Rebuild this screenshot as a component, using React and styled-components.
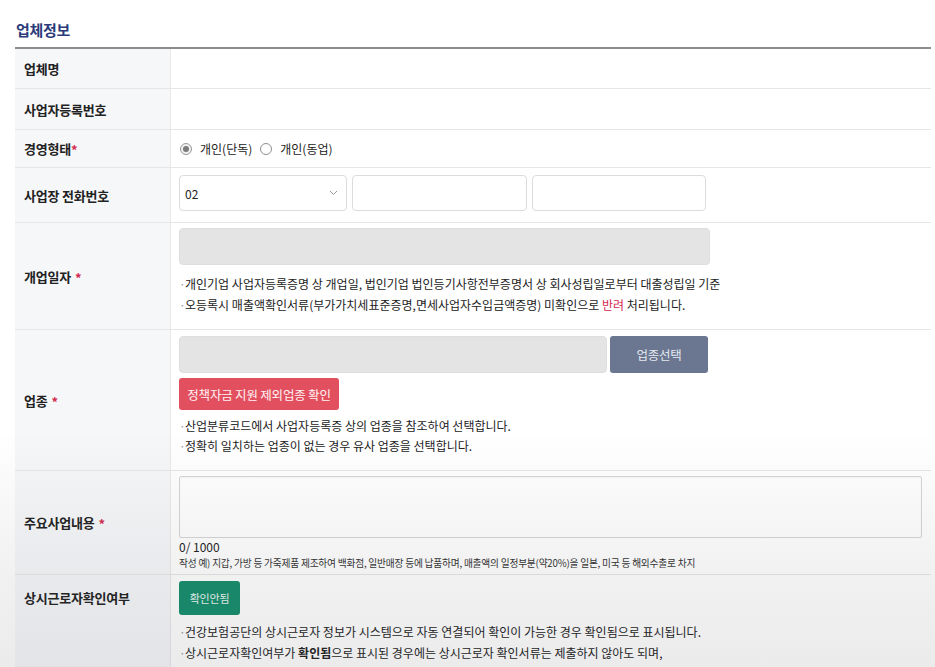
import React from 'react'
import styled, { createGlobalStyle } from 'styled-components'

const GlobalStyle = createGlobalStyle`
  html, body {
    margin: 0;
    padding: 0;
    background: #ffffff;
  }
  body {
    font-family: "Noto Sans CJK KR", "Noto Sans", sans-serif;
    color: #222;
  }
`

const Page = styled.div`
  position: relative;
  width: 935px;
  height: 667px;
  overflow: hidden;
  padding: 0 4px 0 15px;
  box-sizing: border-box;
  &::after {
    content: '';
    position: absolute;
    left: 0;
    right: 0;
    top: 430px;
    bottom: 0;
    pointer-events: none;
    background: linear-gradient(to bottom, rgba(0,0,0,0) 0%, rgba(60,60,70,0.07) 60%, rgba(60,60,70,0.1) 100%);
  }
`

const Title = styled.h2`
  margin: 0;
  height: 47px;
  box-sizing: border-box;
  padding-top: 19px;
  padding-left: 1px;
  font-size: 15px;
  line-height: 22px;
  font-weight: 700;
  color: #2b3b7a;
  letter-spacing: -0.3px;
`

const Table = styled.div`
  border-top: 2px solid #8c8c8c;
`

const Row = styled.div`
  display: grid;
  grid-template-columns: 156px 1fr;
  min-height: ${({ $h }) => $h}px;
  box-sizing: border-box;
  border-bottom: 1px solid #e6e6e6;
`

const Label = styled.div`
  display: flex;
  align-items: ${({ $top }) => ($top ? 'flex-start' : 'center')};
  padding: ${({ $top }) => ($top ? '13px 9px 0' : '0 9px')};
  background: #f6f7f9;
  border-right: 1px solid #e8e8e8;
  font-size: 13px;
  font-weight: 700;
  color: #222;
  letter-spacing: -0.2px;
`

const Star = styled.span`
  color: #d3294e;
  font-size: 13px;
  font-weight: 700;
  margin-left: ${({ $gap }) => ($gap ? '4px' : '0')};
  position: relative;
  top: 1px;
`

const Cell = styled.div`
  display: flex;
  flex-direction: column;
  justify-content: ${({ $center }) => ($center ? 'center' : 'flex-start')};
  padding: ${({ $pt }) => $pt ?? 7}px 9px 0 8px;
  background: #fff;
`

const RadioGroup = styled.div`
  display: flex;
  align-items: center;
  font-size: 12px;
  color: #222;
`

const RadioDot = styled.span`
  width: 12px;
  height: 12px;
  border-radius: 50%;
  box-sizing: border-box;
  border: 1px solid ${({ $on }) => ($on ? '#9a9a9a' : '#8f8f8f')};
  background: ${({ $on }) => ($on ? '#f0f0f0' : '#fff')};
  display: inline-flex;
  align-items: center;
  justify-content: center;
  margin: 0 8px 0 1px;
  &::after {
    content: '';
    width: 6px;
    height: 6px;
    border-radius: 50%;
    background: ${({ $on }) => ($on ? '#7a7a7a' : 'transparent')};
  }
`

const RadioText = styled.span`
  margin-right: 7px;
`

const FieldLine = styled.div`
  display: flex;
  gap: ${({ $gap }) => $gap ?? 4}px;
  width: ${({ $w }) => $w}px;
`

const Select = styled.div`
  width: 168px;
  flex: none;
  height: 36px;
  box-sizing: border-box;
  border: 1px solid #dcdcdc;
  border-radius: 4px;
  background: #fff;
  display: flex;
  align-items: center;
  justify-content: space-between;
  padding: 0 8px 0 5px;
  font-size: 12px;
  color: #222;
`

const TextInput = styled.div`
  flex: 1;
  height: 36px;
  box-sizing: border-box;
  border: 1px solid #dcdcdc;
  border-radius: 4px;
  background: #fff;
`

const GrayBox = styled.div`
  flex: ${({ $w }) => ($w ? 'none' : '1')};
  height: 37px;
  box-sizing: border-box;
  border: 1px solid #dedede;
  border-radius: 4px;
  background: #e4e4e4;
  width: ${({ $w }) => ($w ? `${$w}px` : 'auto')};
`

const Button = styled.button`
  border: none;
  border-radius: 3px;
  font-family: inherit;
  font-size: ${({ $fs }) => $fs ?? 12.5}px;
  color: ${({ $color }) => $color};
  background: ${({ $bg }) => $bg};
  height: ${({ $h }) => $h}px;
  width: ${({ $w }) => $w}px;
  padding: 0;
  margin-top: ${({ $mt }) => $mt ?? 0}px;
  letter-spacing: -0.2px;
  white-space: nowrap;
`

const Notes = styled.ul`
  list-style: none;
  margin: ${({ $mt }) => $mt}px 0 0;
  padding: 0;
  font-size: 12px;
  line-height: ${({ $lh }) => $lh ?? 21}px;
  color: #222;
`

const Note = styled.li`
  display: flex;
  white-space: nowrap;
  &::before {
    content: '·';
    color: #9a9a9a;
    width: 6px;
    flex: none;
  }
  b {
    font-weight: 700;
  }
`

const Red = styled.span`
  color: #d3294e;
`

const TextArea = styled.div`
  height: 62px;
  box-sizing: border-box;
  border: 1px solid #d6d6d6;
  border-radius: 2px;
  background: #fff;
  box-shadow: inset 0 1px 2px rgba(0,0,0,0.04);
`

const Counter = styled.div`
  font-size: 12px;
  line-height: 16px;
  color: #222;
  margin-top: 1px;
`

const Example = styled.div`
  font-size: 9.7px;
  line-height: 14px;
  color: #333;
  margin-top: 1px;
  letter-spacing: -0.2px;
  white-space: nowrap;
`

const Chevron = () => (
  <svg width="9" height="6" viewBox="0 0 9 6" fill="none">
    <path d="M1 1l3.5 3.5L8 1" stroke="#9a9a9a" strokeWidth="1" />
  </svg>
)

export default function App() {
  return (
    <>
      <GlobalStyle />
      <Page>
        <Title>업체정보</Title>
        <Table>
          <Row $h={40}>
            <Label>업체명</Label>
            <Cell $center />
          </Row>
          <Row $h={41}>
            <Label>사업자등록번호</Label>
            <Cell $center />
          </Row>
          <Row $h={38}>
            <Label>
              경영형태<Star>*</Star>
            </Label>
            <Cell $center $pt={0}>
              <RadioGroup>
                <RadioDot $on />
                <RadioText>개인(단독)</RadioText>
                <RadioDot />
                <RadioText>개인(동업)</RadioText>
              </RadioGroup>
            </Cell>
          </Row>
          <Row $h={55}>
            <Label>사업장 전화번호</Label>
            <Cell $pt={7}>
              <FieldLine $w={527} $gap={5}>
                <Select>
                  <span>02</span>
                  <Chevron />
                </Select>
                <TextInput />
                <TextInput />
              </FieldLine>
            </Cell>
          </Row>
          <Row $h={107}>
            <Label>
              개업일자<Star $gap>*</Star>
            </Label>
            <Cell $pt={5}>
              <GrayBox $w={531} />
              <Notes $mt={8}>
                <Note>개인기업 사업자등록증명 상 개업일, 법인기업 법인등기사항전부증명서 상 회사성립일로부터 대출성립일 기준</Note>
                <Note>
                  오등록시 매출액확인서류(부가가치세표준증명,면세사업자수입금액증명) 미확인으로&nbsp;<Red>반려</Red>&nbsp;처리됩니다.
                </Note>
              </Notes>
            </Cell>
          </Row>
          <Row $h={141}>
            <Label>
              업종<Star $gap>*</Star>
            </Label>
            <Cell $pt={6}>
              <FieldLine $w={529} $gap={3}>
                <GrayBox />
                <Button $bg="#6b7791" $color="#e4e8f0" $h={37} $w={98}>
                  업종선택
                </Button>
              </FieldLine>
              <div>
                <Button $bg="#e2505f" $color="#fff3f4" $h={32} $w={160} $mt={5}>
                  정책자금 지원 제외업종 확인
                </Button>
              </div>
              <Notes $mt={6} $lh={20}>
                <Note>산업분류코드에서 사업자등록증 상의 업종을 참조하여 선택합니다.</Note>
                <Note>정확히 일치하는 업종이 없는 경우 유사 업종을 선택합니다.</Note>
              </Notes>
            </Cell>
          </Row>
          <Row $h={104}>
            <Label>
              주요사업내용<Star $gap>*</Star>
            </Label>
            <Cell $pt={5}>
              <TextArea />
              <Counter>0/ 1000</Counter>
              <Example>
                작성 예) 지갑, 가방 등 가죽제품 제조하여 백화점, 일반매장 등에 납품하며, 매출액의 일정부분(약20%)을 일본, 미국 등 해외수출로 차지
              </Example>
            </Cell>
          </Row>
          <Row $h={130}>
            <Label $top>상시근로자확인여부</Label>
            <Cell $pt={6}>
              <div>
                <Button $bg="#168e6c" $color="#eaf7f2" $h={34} $w={61} $fs={11}>
                  확인안됨
                </Button>
              </div>
              <Notes $mt={6}>
                <Note>건강보험공단의 상시근로자 정보가 시스템으로 자동 연결되어 확인이 가능한 경우 확인됨으로 표시됩니다.</Note>
                <Note>
                  <span>
                    상시근로자확인여부가 <b>확인됨</b>으로 표시된 경우에는 상시근로자 확인서류는 제출하지 않아도 되며,
                  </span>
                </Note>
              </Notes>
            </Cell>
          </Row>
        </Table>
      </Page>
    </>
  )
}
